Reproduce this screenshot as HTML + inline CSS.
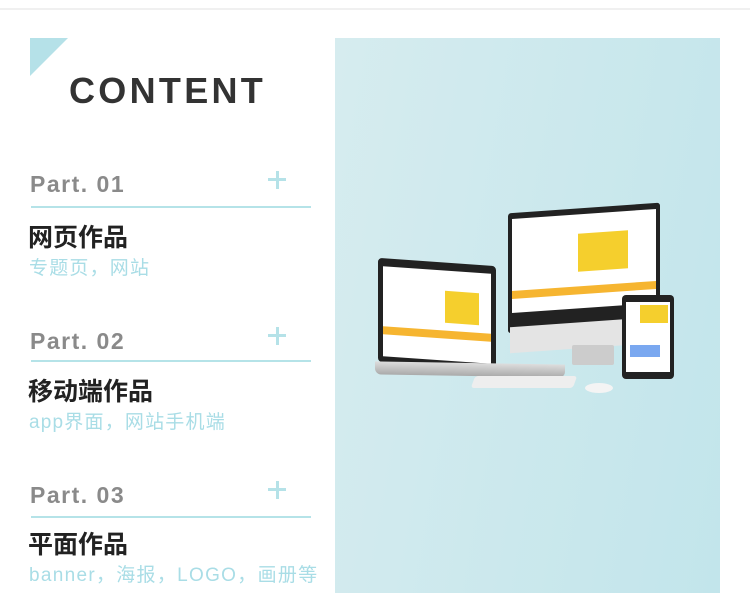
<!DOCTYPE html>
<html><head><meta charset="utf-8"><style>
*{margin:0;padding:0;box-sizing:border-box}
body{width:750px;height:613px;background:#fff;position:relative;overflow:hidden;font-family:"Liberation Sans","Noto Sans CJK SC",sans-serif}
.a{position:absolute}
.part{position:absolute;left:30px;font-size:23px;color:#8a8a8a;letter-spacing:1.5px;line-height:1;font-weight:bold}
.plus{position:absolute;left:268px;width:18px;height:18px}
.plus:before{content:"";position:absolute;left:0;top:7px;width:18px;height:3px;background:#b5e2e8}
.plus:after{content:"";position:absolute;left:7.5px;top:0;width:3px;height:18px;background:#b5e2e8}
.line{position:absolute;left:31px;width:280px;height:2px;background:#b5e3e8}
.t{position:absolute;left:28px;font-size:25px;color:#222;line-height:1;font-weight:bold}
.s{position:absolute;left:29px;font-size:19px;color:#a9dde6;line-height:1;letter-spacing:1.2px}
</style></head><body>
<div class="a" style="left:0;top:8px;width:750px;height:2px;background:#f0f0f0"></div>
<div class="a" style="left:30px;top:38px;width:0;height:0;border-top:38px solid #b5e1e8;border-right:38px solid transparent"></div>
<div class="a" style="left:69px;top:73px;font-size:36px;color:#333;letter-spacing:3.3px;line-height:1;font-weight:bold">CONTENT</div>

<div class="part" style="top:173px">Part. 01</div><div class="plus" style="top:171px"></div><div class="line" style="top:206px"></div>
<div class="t" style="top:226px">网页作品</div><div class="s" style="top:259px">专题页，网站</div>

<div class="part" style="top:330px">Part. 02</div><div class="plus" style="top:327px"></div><div class="line" style="top:360px"></div>
<div class="t" style="top:380px">移动端作品</div><div class="s" style="top:413px">app界面，网站手机端</div>

<div class="part" style="top:484px">Part. 03</div><div class="plus" style="top:481px"></div><div class="line" style="top:516px"></div>
<div class="t" style="top:533px">平面作品</div><div class="s" style="top:566px;letter-spacing:1.3px">banner，海报，LOGO，画册等</div>

<div class="a" style="left:335px;top:38px;width:385px;height:555px;background:linear-gradient(100deg,#d6ecef,#c2e5eb)"></div>
<div class="a" style="left:508px;top:208px;width:152px;height:120px;background:#222;border-radius:3px;transform:skewY(-4deg)"></div>
<div class="a" style="left:512px;top:214px;width:144px;height:94px;background:#fff;transform:skewY(-4deg)"></div>
<div class="a" style="left:578px;top:232px;width:50px;height:38px;background:#f5cf2d;transform:skewY(-4deg)"></div>
<div class="a" style="left:512px;top:286px;width:144px;height:8px;background:#f6b530;transform:skewY(-4deg)"></div>
<div class="a" style="left:510px;top:322px;width:150px;height:26px;background:#e4e4e4;transform:skewY(-4deg)"></div>
<div class="a" style="left:572px;top:345px;width:42px;height:20px;background:#ccc;border-radius:2px"></div>
<div class="a" style="left:378px;top:262px;width:118px;height:104px;background:#222;border-radius:4px;transform:skewY(4deg)"></div>
<div class="a" style="left:383px;top:270px;width:108px;height:90px;background:#fff;transform:skewY(4deg)"></div>
<div class="a" style="left:445px;top:292px;width:34px;height:32px;background:#f5cf2d;transform:skewY(4deg)"></div>
<div class="a" style="left:383px;top:330px;width:108px;height:8px;background:#f6b530;transform:skewY(4deg)"></div>
<div class="a" style="left:375px;top:363px;width:190px;height:13px;background:linear-gradient(#ddd,#aaa);border-radius:0 0 6px 6px;transform:skewY(1deg)"></div>
<div class="a" style="left:473px;top:376px;width:102px;height:12px;background:#eee;border-radius:3px;transform:skewX(-20deg)"></div>
<div class="a" style="left:585px;top:383px;width:28px;height:10px;background:#f4f4f4;border-radius:50%"></div>
<div class="a" style="left:622px;top:295px;width:52px;height:84px;background:#222;border-radius:4px"></div>
<div class="a" style="left:626px;top:302px;width:44px;height:70px;background:#fff"></div>
<div class="a" style="left:640px;top:305px;width:28px;height:18px;background:#f5cf2d"></div>
<div class="a" style="left:630px;top:345px;width:30px;height:12px;background:#7aa8f0"></div>
</body></html>
